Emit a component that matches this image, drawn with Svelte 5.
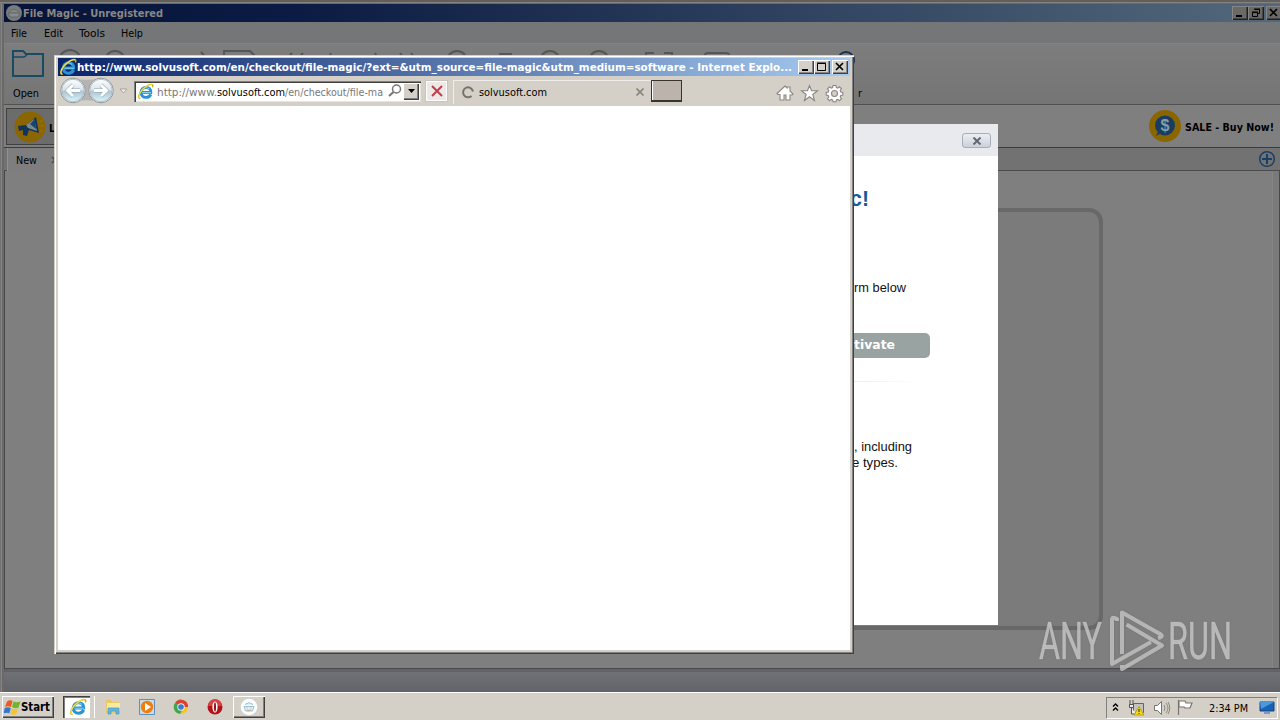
<script>
  const menus = [['File', 16, 11], ['Edit', 19, 44], ['Tools', 26, 79], ['Help', 22, 121]];
</script>

{#snippet label(text, width, size = 11, weight = 400, color = '#000', family = 'tahoma')}
  <svg class="label {family}" {width} height="16" style:font-size="{size}px" style:font-weight={weight}>
    <text x="0" y="12" textLength={width} lengthAdjust="spacingAndGlyphs" fill={color}>{text}</text>
  </svg>
{/snippet}

{#snippet ie(size)}
  <svg width={size} height={size} viewBox="0 0 18 18">
    <path d="M14.600 12C13.600 14.200 11.700 15.200 9.500 15.200c-3.300 0-5.200-2.200-5.200-5.200s2.200-5.300 5.300-5.300 5.200 2.200 5 5.300H5.500" fill="none" stroke="#2a93d6" stroke-width="3.100" />
    <path d="M14.800 10.200H5.500M5 8.500c.8-3.600 5.500-4.700 8-2" fill="none" stroke="#7fd0f5" stroke-width="1.100" />
    <path d="M3.600 16.200C.8 16.800 1.200 12.500 4.800 8 8.800 3.300 14.700.4 16.300 1.900c.6.600.5 1.600.1 2.600" fill="none" stroke="#c9ae22" stroke-width="1.500" />
    <path d="M3.400 16C1 16 1.700 12 5 7.900 8.900 3.400 14.500.8 16.100 2" fill="none" stroke="#f5e33c" stroke-width="1.100" />
  </svg>
{/snippet}

{#snippet winbtns(restore)}
  <div class="winbtns">
    <span><svg width="14" height="12"><path d="M3 9h6" stroke="#000" stroke-width="2" /></svg></span>
    <span>
      <svg width="14" height="12" fill="none" stroke="#000">
        {#if restore}
          <path d="M5.500 2.500h5v4h-2M5 2h6M3.500 5.500h5v4h-5zM3 5h6" />
        {:else}
          <path d="M2.500 2.500h8v7h-8zM2 2h9" />
        {/if}
      </svg>
    </span>
    <span class="close"><svg width="14" height="12"><path d="M3 2l7 7M10 2l-7 7" stroke="#000" stroke-width="1.700" /></svg></span>
  </div>
{/snippet}

<main class="desktop">
  <section class="app">
    <header class="apptitle">
      <svg width="18" height="18" viewBox="0 0 18 18">
        <circle cx="9" cy="9" r="8" fill="#777b7d" />
        <path d="M3 9h12l-2 4H5zM5 8c0-3 8-3 8 0" fill="#898b8c" stroke="#565b5e" stroke-width=".7" />
      </svg>
      {@render label('File Magic - Unregistered', 140, 11, 700, '#898785')}
      <i class="grow"></i>
      {@render winbtns(true)}
    </header>
    <nav>
      {#each menus as [name, width, left], i}
        <span style:margin-left="{i ? left - menus[i - 1][2] - menus[i - 1][1] : 7}px">{@render label(name, width)}</span>
      {/each}
    </nav>
    <div class="tools">
      <div class="open">
        <svg width="34" height="30" viewBox="0 0 34 30">
          <path d="M2 27V2h10l3 3h17v22z" fill="none" stroke="#174a63" stroke-width="2" />
          <path d="M2 8h11l3-2" fill="none" stroke="#174a63" stroke-width="1.500" />
        </svg>
        {@render label('Open', 26)}
      </div>
      <svg class="peeks" width="818" height="16" fill="none" stroke="#555657" stroke-width="2">
        <circle cx="28" cy="13" r="11" /><circle cx="73" cy="13" r="10" />
        <path d="M106 7v7M159 4l7 8M182 14V3h26l4 4v7M250 5l-7 8M261 5l-7 8M289 5l-4 9M333 5l4 9M358 5l7 9M369 5l7 9" />
        <circle cx="415" cy="13" r="10" /><path d="M457 6h13" />
        <circle cx="508" cy="13" r="10" /><circle cx="557" cy="13" r="10" />
        <path d="M604 14V5h8M622 5h8v9M663 14V7q0-2 3-2h18q3 0 3 2v8" />
        <circle cx="804" cy="12" r="8" stroke="#193250" />
      </svg>
      <span class="tail">{@render label('r', 4)}</span>
    </div>
    <div class="offer">
      <div class="learn">
        <svg width="34" height="36" viewBox="0 0 34 36">
          <circle cx="17" cy="18" r="15.500" fill="#8a6500" />
          <path d="M5 17l8-1 10-8 3 16-10-3-2 6-4-1v-5l-4 1z" fill="#10345a" />
          <path d="M13 16l8-6 3 12-9-3z" fill="#7c888c" /><path d="M17 15l5-5 1 10z" fill="#17456f" />
          <path d="M27 13l3-2M27 17h4M27 21l3 2" stroke="#a27500" />
        </svg>
        {@render label('L', 6, 11, 700)}
      </div>
      <div class="sale">
        <svg width="34" height="34" viewBox="0 0 34 34">
          <circle cx="17" cy="17" r="16" fill="#8a6500" />
          <path d="M8 27l3-6h8z" fill="#173d63" /><circle cx="17" cy="16.500" r="10" fill="#173d63" />
          <text x="17" y="22" text-anchor="middle" font-size="16" font-weight="700" font-family="Liberation Sans" fill="#8b9ba6">$</text>
        </svg>
        {@render label('SALE - Buy Now!', 89, 11, 700)}
      </div>
    </div>
    <div class="strip">
      <div class="tab">
        {@render label('New', 21)}
        <svg width="7" height="8"><path d="M1 1l6 6M7 1L1 7" stroke="#4a4a4a" stroke-width="1.500" /></svg>
      </div>
      <svg width="18" height="18" viewBox="0 0 18 18" fill="none" stroke="#183f66" stroke-width="1.500">
        <circle cx="9" cy="9" r="7.300" /><path d="M9 4v10M4 9h10" stroke-width="2" />
      </svg>
    </div>
    <div class="canvas"><div class="dropzone"></div></div>
    <footer></footer>
  </section>

  <section class="dialog">
    <header>
      <button aria-label="Close"><svg width="10" height="8"><path d="M1.500 .5l7 7M8.500 .5l-7 7" stroke="#626773" stroke-width="2" /></svg></button>
    </header>
    <div class="body">
      <h1>{@render label('c!', 19, 22, 700, '#195a99', 'arial')}</h1>
      <p class="form">{@render label('orm below', 59, 13, 400, '#111', 'arial')}</p>
      <div class="activate">{@render label('Activate', 58, 13, 700, '#fff', 'verdana')}</div>
      <hr />
      <p class="info">{@render label(', including', 58, 13, 400, '#111', 'arial')}</p>
      <p class="types">{@render label('e types.', 46, 13, 400, '#111', 'arial')}</p>
    </div>
  </section>

  <section class="browser">
    <header class="ietitle">
      {@render ie(18)}
      {@render label('http://www.solvusoft.com/en/checkout/file-magic/?ext=&utm_source=file-magic&utm_medium=software - Internet Explo...', 715, 11, 700, '#fff')}
      <i class="grow"></i>
      {@render winbtns(false)}
    </header>
    <div class="iebar">
      <svg class="arrows" width="58" height="28" viewBox="0 0 58 28">
        <defs>
          <linearGradient id="orb" x2="0" y2="1">
            <stop offset="0" stop-color="#fdfefe" /><stop offset=".45" stop-color="#dce6eb" />
            <stop offset=".55" stop-color="#b0c6d3" /><stop offset="1" stop-color="#daf5fc" />
          </linearGradient>
        </defs>
        <path d="M14 1.500Q29 4 43 1.500v24Q29 21 14 25.500z" fill="#b5b4b1" />
        {#each [15, 43] as cx}
          <circle {cx} cy="13.500" r="12.300" fill="#f1f3f4" stroke="#92999d" />
          <circle {cx} cy="13.500" r="11.200" fill="url(#orb)" stroke="#a3b4be" stroke-width=".8" />
        {/each}
        <path d="M22 13.500H11M15 8l-5.500 5.500L15 19M36 13.500h11M43 8l5.500 5.500L43 19" fill="none" stroke="#8ba4b4" stroke-width="4" />
        <path d="M22 13.500H11M15 8l-5.500 5.500L15 19M36 13.500h11M43 8l5.500 5.500L43 19" fill="none" stroke="#fff" stroke-width="3" />
      </svg>
      <svg class="chev" width="9" height="7"><path d="M1 1h7L4.500 5z" fill="#f1efed" stroke="#a5a19c" /></svg>
      <div class="address">
        {@render ie(17)}
        <svg class="label tahoma url" width="227" height="16" font-size="11">
          <text x="0" y="12" textLength="60" lengthAdjust="spacingAndGlyphs" fill="#777">http://www.</text>
          <text x="60" y="12" textLength="68" lengthAdjust="spacingAndGlyphs" fill="#000">solvusoft.com</text>
          <text x="128" y="12" textLength="98" lengthAdjust="spacingAndGlyphs" fill="#777">/en/checkout/file-ma</text>
        </svg>
        <svg class="search" width="16" height="16" fill="none" stroke="#777"><circle cx="9.500" cy="6" r="4" stroke-width="1.500" /><path d="M6.500 9L2 13" stroke-width="2.200" /></svg>
        <span class="drop"><svg width="9" height="6"><path d="M1 1h7L4.500 5z" /></svg></span>
      </div>
      <div class="stop"><svg width="12" height="12"><path d="M1 1l10 10M11 1L1 11" stroke="#c43d48" stroke-width="2" /></svg></div>
      <div class="ietab">
        <svg width="14" height="14" viewBox="0 0 14 14"><path d="M10.500 11A5 5 0 1 1 12 6.500" fill="none" stroke="#77736f" stroke-width="2" /></svg>
        {@render label('solvusoft.com', 68)}
        <i class="grow"></i>
        <svg width="10" height="10"><path d="M1.500 1.500l7 7M8.500 1.500l-7 7" stroke="#85807b" stroke-width="1.700" /></svg>
      </div>
      <div class="newtab"></div>
      <i class="grow"></i>
      <svg class="tray3" width="72" height="20" viewBox="0 0 72 20" fill="#fff" stroke="#8b8681" stroke-width="1.100">
        <path d="M2 10.500L10 3l2 2V4h3v4l3 3-1 1h-2v5h-4v-5H9v5H5v-5.500H3z" />
        <path d="M34.500 2.500l2 5.300h6l-4.700 3.700 1.700 6-5-3.700-5 3.700 1.700-6-4.700-3.700h6z" />
        <path d="M58 2.500h3l.4 2 1.400.6 1.700-1.300 2 2-1.300 1.700.6 1.500 2 .4v2.700l-2 .4-.6 1.500 1.300 1.700-2 2-1.700-1.300-1.400.6-.4 1.700h-3l-.4-1.700-1.400-.6-1.700 1.300-2-2 1.300-1.700-.6-1.500-2-.4V9.400l2-.4.6-1.500-1.300-1.700 2-2 1.700 1.300 1.400-.6z" />
        <circle cx="59.500" cy="10.500" r="3" fill="#d4d0c8" />
      </svg>
    </div>
    <div class="page"></div>
  </section>

  <svg class="mark" width="210" height="76" viewBox="1030 604 210 76">
    <g fill="#d2d2d2" fill-opacity=".72" stroke="#d2d2d2" stroke-opacity=".4" stroke-width=".7" font-family="Roboto" font-size="52">
      <text x="1039" y="659" textLength="63" lengthAdjust="spacingAndGlyphs">ANY</text>
      <text x="1168" y="659" textLength="64" lengthAdjust="spacingAndGlyphs">RUN</text>
    </g>
    <g fill="none" stroke="#c6c6c6" stroke-opacity=".8" stroke-width="4" stroke-linejoin="round">
      <path d="M1122 654V612.500l39 22q2 1.500-1 3l-2 .5" />
      <path d="M1126.500 624.500L1162 645.500l-40 23.500v-4" />
      <path d="M1117 621v-2q-5-3-5 1v44l39-22" />
    </g>
  </svg>

  <section class="taskbar">
    <div class="start">
      <svg width="17" height="17" viewBox="0 0 17 17">
        <path d="M3 2.500q3-2 5.500-.5L7 8Q4 6.500 1 8z" fill="#ed5b22" /><path d="M9.500 2.500q3 1.500 7 0L14.500 8.500Q11 10 8 8z" fill="#70b52c" />
        <path d="M.800 9q3-1.500 6 0l-1.500 5.500q-2-1.500-6 0z" fill="#3577ca" /><path d="M7.800 9.500q3 1.500 6.500.3l-2 5.200q-3 1.500-6 0z" fill="#f7c42d" />
      </svg>
      {@render label('Start', 29, 12, 700)}
    </div>
    <div class="task active">{@render ie(18)}</div>
    <div class="quick">
      <svg width="18" height="18" viewBox="0 0 18 18">
        <path d="M2 4V2h5l1 2h7v11H2z" fill="#eac866" /><path d="M3 5h13v8H3z" fill="#f9eaa0" />
        <path d="M4 10h11v6h-3v-3H7v3H4z" fill="#62b7df" stroke="#4796c2" stroke-width=".7" />
      </svg>
      <svg width="18" height="18" viewBox="0 0 18 18">
        <path d="M1.500 1.500h15v15h-15z" fill="#c3dcef" stroke="#5b91bb" /><circle cx="9" cy="9" r="6.200" fill="#f07d0c" /><path d="M7 5l6 4-6 4z" fill="#fff" />
      </svg>
      <svg width="18" height="18" viewBox="0 0 18 18">
        <circle cx="9" cy="9" r="7" fill="#f5c52b" /><path d="M9 9L3 5a7 7 0 0 1 13 4z" fill="#d9432f" />
        <path d="M9 9L3 5a7 7 0 0 0 5 11l3-5z" fill="#42a552" /><circle cx="9" cy="9" r="3.700" fill="#eee" /><circle cx="9" cy="9" r="2.800" fill="#397dcc" />
      </svg>
      <svg width="18" height="18" viewBox="0 0 18 18">
        <circle cx="9" cy="9" r="7.500" fill="#b31219" /><path d="M2 8a7 7 0 0 1 14 0" fill="#d74245" /><ellipse cx="9" cy="9" rx="2.600" ry="5.600" fill="#fff" /><ellipse cx="9" cy="9" rx="1" ry="4.800" fill="#991015" />
      </svg>
    </div>
    <div class="task magic">
      <svg width="18" height="18" viewBox="0 0 18 18"><circle cx="9" cy="9" r="8.300" fill="#fcfdfe" /><path d="M4 8.500h10l-1.500 4.500h-7zM5.500 7q0-2 2-1.500 1.500-2 3 0 2-.5 2 1.500" fill="#e2eff8" stroke="#8fbad7" stroke-width=".9" /><path d="M6.500 10h1M10.500 10h1M7 12q2 1 4 0" stroke="#d7a46c" fill="none" /></svg>
    </div>
    <i class="grow"></i>
    <div class="tray">
      <svg width="8" height="11" fill="none" stroke="#000" stroke-width="1.400"><path d="M1 4.500l2.500-2.500L6 4.500M1 8.500l2.500-2.500L6 8.500" /></svg>
      <svg class="net" width="18" height="18" viewBox="0 0 18 18">
        <path d="M5.500 4.500h10v9h-10z" fill="#c4c3bf" stroke="#66645f" /><path d="M2 1v5M5 1v5M1.500 5.500h4v3h-4zM3.500 9v6h5" fill="#eee" stroke="#55534f" />
        <path d="M11 7.500l5 8.500H6z" fill="#f4db19" stroke="#a49109" stroke-width=".7" /><path d="M11 10v3M11 14v1" stroke="#222" />
      </svg>
      <svg class="sound" width="18" height="16" fill="#fff" stroke="#77736f"><path d="M1.500 5.500h3l4-4v13l-4-4h-3z" /><path d="M11 5q2 3 0 6M13 3q4 5 0 10M15 2q3.500 6 0 12" fill="none" stroke-width=".8" /></svg>
      <svg class="flag" width="17" height="17"><path d="M2.500 1v15M3 2h6l1 2h6l-2 5H9L8 8H3z" fill="#fff" stroke="#77736f" stroke-width="1.200" /></svg>
      {@render label('2:34 PM', 39)}
      <svg class="show" width="16" height="14"><path d="M1 1h14v9H1z" fill="#1b62b5" stroke="#15437f" /><path d="M1 1h14L2 8z" fill="#489adc" /><path d="M5 12h6" stroke="#7c9abd" stroke-width="2" /></svg>
    </div>
  </section>
</main>

<style>
  :global(body) { margin: 0; overflow: hidden; }
  .desktop { position: relative; width: 1280px; height: 720px; overflow: hidden; background: #777; }
  .desktop * { box-sizing: border-box; }
  svg { display: block; flex: none; }
  .label { overflow: visible; }
  .tahoma { font-family: 'DejaVu Sans Condensed', 'DejaVu Sans', sans-serif; font-stretch: condensed; }
  .arial { font-family: 'Liberation Sans', sans-serif; }
  .verdana { font-family: 'DejaVu Sans', sans-serif; }
  .grow { flex: 1; }
  .app { position: absolute; left: 0; top: 0; width: 1280px; height: 692px; display: flex; flex-direction: column; padding: 4px 0 0 4px; background: #6b6967; box-shadow: inset 0 2px #625f5b, inset 0 3px #858381, inset 1px 0 #737373, inset 2px 0 #858585; }
  .apptitle { height: 18px; flex: none; display: flex; align-items: center; padding-left: 1px; background: linear-gradient(90deg, #06143a, #0b1b43 23%, #53687b); }
  .winbtns { display: flex; align-items: center; }
  .winbtns span { width: 16px; height: 14px; padding: 1px; background: #d4d0c8; box-shadow: inset 1px 1px #fff, inset -1px -1px #404040, inset -2px -2px #888; }
  .winbtns .close { margin-left: 2px; }
  .apptitle .winbtns { width: 48px; flex: none; }
  .apptitle .winbtns span { flex: none; background: #6b6966; box-shadow: inset 1px 1px #858585, inset -1px -1px #202020, inset -2px -2px #444; }
  nav { height: 21px; flex: none; display: flex; align-items: center; background: #757677; }
  .tools { height: 62px; flex: none; display: flex; align-items: flex-start; background: linear-gradient(#7d7d7d, #757575); border-bottom: 1px solid #515151; box-shadow: inset 0 1px #828282; }
  .open { width: 52px; padding: 6px 0 0 7px; }
  .open .label { margin: 6px 0 0 2px; }
  .peeks { margin-left: -14px; margin-top: 5px; }
  .tail { margin-top: 42px; margin-left: -2px; }
  .offer { height: 43px; flex: none; display: flex; justify-content: space-between; background: #7f7f7f; border-bottom: 1px solid #393b3d; }
  .learn { width: 120px; margin: 3px 0 2px 2px; border: 1px solid #404040; background: #6c6c6c; display: flex; align-items: center; padding-left: 6px; gap: 2px; }
  .sale { display: flex; align-items: center; gap: 3px; padding-right: 6px; }
  .offer .label { margin-top: 2px; }
  .strip { height: 23px; flex: none; display: flex; align-items: center; justify-content: space-between; padding-right: 4px; background: #727273; border-bottom: 1px solid #4c4c4c; }
  .tab { width: 60px; height: 23px; margin-left: 3px; padding: 2px 0 0 8px; display: flex; align-items: center; gap: 14px; background: #7e7e7e; border-left: 1px solid #909090; }
  .canvas { height: 498px; flex: none; border: solid #494949; border-width: 0 1px 1px; padding: 37px 176px 38px; background: #7f7f7f; box-shadow: inset -6px 0 #7a7a7a, inset -7px 0 #858585; }
  .dropzone { height: 422px; border: 4px solid #686868; border-radius: 14px; background: #7b7b7b; }
  footer { flex: 1; background: linear-gradient(#707175, #626368); border-top: 3px double #616265; }
  .dialog { position: absolute; left: 282px; top: 124px; width: 716px; height: 501px; background: #fff; }
  .dialog header { height: 32px; display: flex; justify-content: flex-end; padding: 9px 7px; background: #e9eaee; }
  .dialog button { width: 29px; height: 15px; padding: 0; display: grid; place-items: center; border: 1px solid #a9adb7; border-radius: 3px; background: linear-gradient(#eceef2, #cbd0da); }
  .body { display: flex; flex-direction: column; align-items: flex-end; }
  .body h1, .body p { margin: 0; height: 16px; }
  .body h1 { margin: 38px 129px 0 0; }
  .body .form { margin: 70px 92px 0 0; }
  .activate { width: 260px; height: 25px; margin: 37px 68px 0 0; padding: 4px 35px 0 0; display: flex; justify-content: flex-end; background: #98a3a2; border-radius: 5px; }
  hr { width: 360px; height: 1px; margin: 23px 80px 0 0; border: 0; background: linear-gradient(90deg, #ddd, #eaeaea 80%, #fff); }
  .body .info { margin: 57px 86px 0 0; }
  .body .types { margin: 0 100px 0 0; }
  .browser { position: absolute; left: 54px; top: 55px; width: 800px; height: 599px; padding: 3px 4px 4px; display: flex; flex-direction: column; background: #d4d0c8; box-shadow: inset 1px 1px #d4d0c8, inset 2px 2px #fff, inset -1px -1px #404040, inset -2px -2px #808080; }
  .ietitle { height: 18px; flex: none; display: flex; align-items: center; padding: 0 2px 0 1px; background: linear-gradient(90deg, #0a246a, #a6caf0); }
  .iebar { height: 30px; flex: none; display: flex; align-items: center; padding: 0 3px 0 0; }
  .chev { margin-left: 3px; }
  .arrows { margin-left: 0; }
  .address { width: 287px; height: 21px; margin-left: 6px; padding: 1px 1px 1px 3px; display: flex; align-items: center; background: #fff; box-shadow: inset 1px 1px #808080, inset 2px 2px #404040, inset -1px -1px #e8e5df; }
  .url { margin: 1px 0 0 3px; }
  .search { margin-left: 3px; }
  .drop { width: 16px; height: 17px; margin-left: 0; display: grid; place-items: center; background: #d4d0c8; box-shadow: inset 1px 1px #fff, inset -1px -1px #404040, inset -2px -2px #808080; }
  .stop { width: 21px; height: 20px; margin-left: 5px; display: grid; place-items: center; background: #ece9e6; border: 1px solid #fff; outline: 1px solid #c9c5bd; }
  .ietab { width: 198px; height: 24px; margin-left: 6px; padding: 0 6px 2px 7px; align-self: flex-end; margin-bottom: 2px; display: flex; align-items: center; gap: 4px; border: solid #efede9; border-width: 1px 0 0 1px; }
  .newtab { width: 31px; height: 22px; background: #bcb4ac; border: solid #38342f; border-width: 1px 1px 2px 1px; box-shadow: inset 1px 0 #fff; }
  .tray3 { margin-top: 4px; }
  .page { flex: 1; background: #fff; }
  .mark { position: absolute; left: 1030px; top: 604px; overflow: visible; filter: drop-shadow(0 0 1px #5555); }
  .taskbar { position: absolute; left: 0; top: 692px; width: 1280px; height: 28px; display: flex; align-items: center; padding-top: 1px; background: #d4d0c8; border-top: 1px solid #fff; }
  .start { width: 52px; height: 22px; margin-left: 2px; display: flex; align-items: center; gap: 0; padding-left: 2px; box-shadow: inset 1px 1px #fff, inset -1px -1px #404040, inset -2px -2px #808080; }
  .start .label { margin-top: -1px; }
  .task { width: 32px; height: 22px; display: grid; place-items: center; box-shadow: inset 1px 1px #fff, inset -1px -1px #404040, inset -2px -2px #808080; }
  .active { margin-left: 9px; width: 31px; padding-left: 3px; background: #fff; border-right: 4px solid #d4d0c8; box-shadow: inset 1px 1px #404040, inset 2px 2px #808080, 1px 0 #fff; }
  .quick { display: flex; gap: 16px; margin-left: 10px; }
  .magic { margin-left: 9px; }
  .tray { width: 171px; height: 21px; margin-right: 3px; padding-left: 5px; display: flex; align-items: center; border: solid #808080; border-width: 1px 0 0 1px; box-shadow: 1px 1px #fff; }
  .net { margin-left: 8px; }
  .sound { margin-left: 7px; }
  .flag { margin-left: 5px; }
  .tray .label { margin-left: 16px; }
  .show { margin-left: 11px; }
</style>
